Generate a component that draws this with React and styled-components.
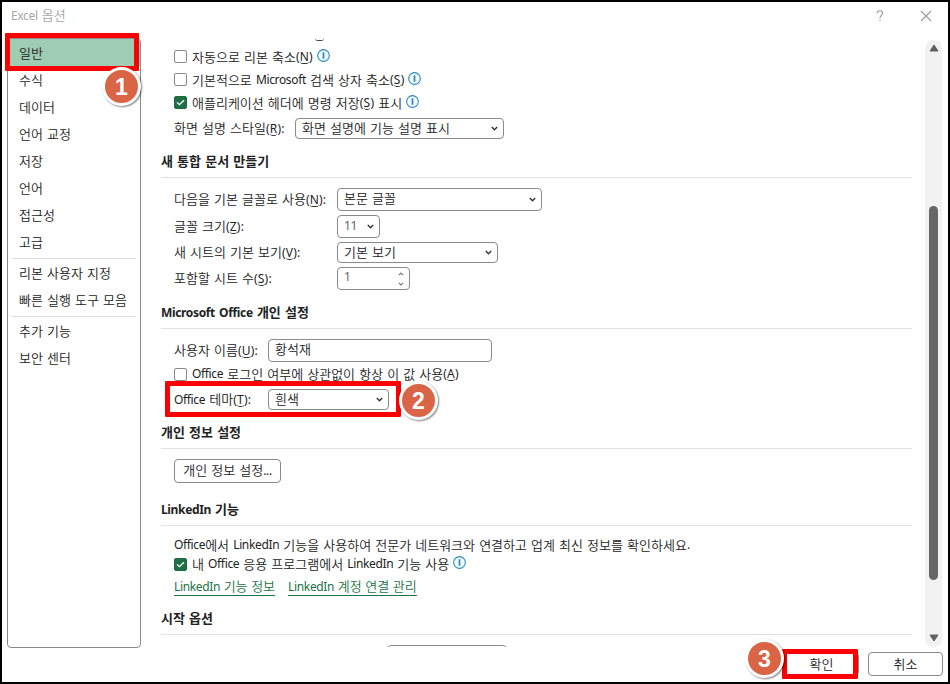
import React from 'react';
import styled, { createGlobalStyle } from 'styled-components';

const GlobalStyle = createGlobalStyle`
  * {
    box-sizing: border-box;
  }
  body {
    margin: 0;
    background-color: #fff;
    overflow: hidden;
  }
`

const Dialog = styled.div`
  position: relative;
  width: 950px;
  height: 684px;
  border: 2px solid #000;
  background-color: #fff;
  color: #222;
  font-family: "Noto Sans CJK KR", sans-serif;
  font-size: 13px;
  font-weight: 350;
  line-height: 20px;
  white-space: pre;
  word-spacing: 1.2px;

  display: flex;
  flex-direction: column;
`

const Latin = styled.span`
  font-family: "Noto Sans", sans-serif;
  font-size: 12px;
  font-weight: 400;
  letter-spacing: ${props => props.$wide ? '0.2px' : '-0.35px'};
`

const TitleBar = styled.header`
  height: 36px;
  padding: 3px 16px 0 9px;
  color: #a6a6a6;

  display: flex;
  justify-content: space-between;
  align-items: flex-start;
`

const TitleIcons = styled.div`
  display: flex;
  gap: 36px;
  padding-top: 5px;

  svg {
    display: block;
  }
`

const Body = styled.div`
  height: 610px;
  padding-left: 5px;
  display: flex;
`

const Sidebar = styled.nav`
  width: 134px;
  height: 610px;
  border: 1px solid #8a8a8a;
  border-radius: 4px;
`

const NavItem = styled.div`
  height: ${props => props.$h || 27}px;
  padding-left: 11px;
  background-color: ${props => props.$active ? '#9fcdb3' : 'transparent'};

  display: flex;
  align-items: center;
`

const NavLine = styled.div`
  height: 1px;
  margin: 2px 4px 0;
  background-color: #dcdcdc;
`

const Content = styled.main`
  width: 751px;
  height: 609px;
  margin-left: 20px;
  overflow: hidden;
`

const ClippedKey = styled.div`
  width: 9px;
  height: 3px;
  margin: 0 0 4px 154px;
  border-bottom: 1px solid #444;
  border-radius: 0 0 4px 4px;
`

const Heading = styled.h2`
  height: ${props => props.$h}px;
  margin: 0;
  padding-bottom: 6px;
  border-bottom: 1px solid #e1e1e1;
  font-size: 13px;
  font-weight: 700;

  display: flex;
  align-items: flex-end;

  ${Latin} {
    font-weight: 700;
    line-height: 1;
  }
`

const Group = styled.div`
  padding: ${props => props.$top || 0}px 0 0 13px;
  display: flex;
  flex-direction: column;
  align-items: flex-start;
  gap: ${props => props.$gap || 0}px;
`

const Row = styled.div`
  height: ${props => props.$h || 23}px;
  display: flex;
  align-items: center;
`

const Label = styled.label`
  width: ${props => props.$w}px;
  flex: none;
`

const Key = styled.u`
  text-decoration: none;
  display: inline-block;
  height: 15px;
  line-height: 15px;
  border-bottom: 1px solid #333;
  border-radius: 0 0 3px 3px;
`

const Field = styled.div`
  width: ${props => props.$w}px;
  height: ${props => props.$h || 23}px;
  padding: 0 6px ${props => props.$h ? 1 : 3}px 6px;
  border: 1px solid #8a8a8a;
  border-radius: 4px;
  background-color: #fff;
  color: ${props => props.$dim ? '#666' : '#222'};
  line-height: 18px;

  display: flex;
  justify-content: space-between;
  align-items: center;

  svg {
    position: relative;
    top: ${props => props.$h ? 0 : 1}px;
    left: 1px;
  }
`

const Spinner = styled.div`
  display: flex;
  flex-direction: column;
  gap: 6px;
  margin-top: 2px;
`

const Box = styled.span`
  width: 13px;
  height: 13px;
  flex: none;
  margin-right: 5px;
  border: 1px solid ${props => props.$on ? '#1c6b43' : '#8a8a8a'};
  border-radius: 2px;
  background-color: ${props => props.$on ? '#1e6e46' : '#fff'};

  display: flex;
  justify-content: center;
  align-items: center;
`

const InfoIcon = styled.svg`
  flex: none;
  margin: 0 0 3px 4px;
`

const Button = styled.button`
  width: ${props => props.$w}px;
  height: 24px;
  padding: 0 0 1px;
  border: 1px solid #8a8a8a;
  border-radius: 4px;
  background-color: #fff;
  color: #222;
  font: inherit;
  line-height: 20px;
  word-spacing: inherit;
`

const Links = styled(Row)`
  gap: 13px;
  word-spacing: 0.7px;
`

const Link = styled.a`
  color: #217346;
  line-height: 16px;
  border-bottom: 1px solid #217346;
`

const Track = styled.div`
  width: 17px;
  height: 607px;
  margin: 2px 0 0 13px;
  padding: 4px 0 5px;
  border-radius: 8px;
  background-color: #f2f2f2;

  display: flex;
  flex-direction: column;
  align-items: center;
`

const Thumb = styled.div`
  width: 9px;
  height: 374px;
  margin: 154px 0 auto;
  border-radius: 5px;
  background-color: #666;
`

const Footer = styled.footer`
  height: 34px;
  padding: 4px 5px 0 0;
  display: flex;
  justify-content: flex-end;
  gap: 9px;
`

// callouts drawn over the dialog
const Frame = styled.div`
  position: absolute;
  left: ${props => props.$x}px;
  top: ${props => props.$y}px;
  width: ${props => props.$w}px;
  height: ${props => props.$h}px;
  border: 5px solid #fa0000;
  border-radius: 1px;
`

const Badge = styled.div`
  position: absolute;
  left: ${props => props.$x}px;
  top: ${props => props.$y}px;
  width: 39px;
  height: 39px;
  border: 3px solid #fff;
  border-radius: 50%;
  background-color: #d96446;
  box-shadow: 1px 1px 2px rgba(0, 0, 0, 0.5);
  color: #fff;
  font-family: "Liberation Sans", sans-serif;
  font-size: 23px;
  font-weight: 700;

  display: flex;
  justify-content: center;
  align-items: center;
`

// hangul and latin runs use different faces
const T = ({ children }) => children.split(/([A-Za-z0-9():.]+)/).map((part, i) => (
  i % 2 ? <Latin key={i}>{part}</Latin> : part
))

const KeyLabel = ({ text, k, end = '' }) => (
  <><T>{text}</T><Latin $wide>(<Key>{k}</Key>){end}</Latin></>
)

const Chevron = ({ up, small }) => (
  <svg width={small ? 6 : 7} height={small ? 4 : 5} viewBox="0 0 7 5">
    <path d={up ? 'M0.8 4L3.5 1.3L6.2 4' : 'M0.8 1L3.5 3.7L6.2 1'} fill="none" stroke={small ? '#777' : '#333'} strokeWidth="1.4" />
  </svg>
)

const Arrow = ({ up }) => (
  <svg width="10" height="8" viewBox="0 0 10 8">
    <path d={up ? 'M5 1L9 7H1Z' : 'M5 7L9 1H1Z'} fill="#606060" stroke="#606060" strokeLinejoin="round" />
  </svg>
)

const Check = ({ on }) => (
  <Box $on={on}>
    {on && (
      <svg width="9" height="7" viewBox="0 0 9 7">
        <path d="M1 3.4L3.4 5.7L8 1.2" fill="none" stroke="#fff" strokeWidth="1.3" />
      </svg>
    )}
  </Box>
)

const Info = () => (
  <InfoIcon width="13" height="13" viewBox="0 0 12 12">
    <circle cx="6" cy="6" r="5.4" fill="#f4fbff" stroke="#2b88c0" strokeWidth="1" />
    <path d="M6 3V9" stroke="#2b88c0" strokeWidth="1.6" />
  </InfoIcon>
)

const Select = ({ w, h, dim, children }) => (
  <Field $w={w} $h={h} $dim={dim}>
    <span><T>{children}</T></span>
    <Chevron />
  </Field>
)

const App = () => {
  return (
    <>
      <GlobalStyle />
      <Dialog>
        <TitleBar>
          <span><T>Excel 옵션</T></span>
          <TitleIcons>
            <svg width="8" height="12" viewBox="0 0 8 12">
              <path d="M1.2 3.2C1.2 0 6.6 0 6.6 3.2C6.6 5.2 4 5.3 4 8M4 9.6V11" fill="none" stroke="#999" strokeWidth="1.1" />
            </svg>
            <svg width="12" height="12" viewBox="0 0 12 12">
              <path d="M1 1L11 11M11 1L1 11" stroke="#999" strokeWidth="1.1" />
            </svg>
          </TitleIcons>
        </TitleBar>
        <Body>
          <Sidebar>
            <NavItem $active>일반</NavItem>
            <NavItem>수식</NavItem>
            <NavItem>데이터</NavItem>
            <NavItem>언어 교정</NavItem>
            <NavItem>저장</NavItem>
            <NavItem>언어</NavItem>
            <NavItem>접근성</NavItem>
            <NavItem $h={28}>고급</NavItem>
            <NavLine />
            <NavItem>리본 사용자 지정</NavItem>
            <NavItem $h={28}>빠른 실행 도구 모음</NavItem>
            <NavLine />
            <NavItem>추가 기능</NavItem>
            <NavItem>보안 센터</NavItem>
          </Sidebar>
          <Content>
            <ClippedKey />
            <Group>
              <Row><Check /><KeyLabel text="자동으로 리본 축소" k="N" /><Info /></Row>
              <Row><Check /><KeyLabel text="기본적으로 Microsoft 검색 상자 축소" k="S" /><Info /></Row>
              <Row><Check on /><KeyLabel text="애플리케이션 헤더에 명령 저장" k="S" /> 표시<Info /></Row>
              <Row $h={29}>
                <Label $w={121}><KeyLabel text="화면 설명 스타일" k="R" end=":" /></Label>
                <Select w={209} h={21}>화면 설명에 기능 설명 표시</Select>
              </Row>
            </Group>
            <Heading $h={35}>새 통합 문서 만들기</Heading>
            <Group $top={10} $gap={4}>
              <Row>
                <Label $w={163}><KeyLabel text="다음을 기본 글꼴로 사용" k="N" end=":" /></Label>
                <Select w={205}>본문 글꼴</Select>
              </Row>
              <Row>
                <Label $w={163}><KeyLabel text="글꼴 크기" k="Z" end=":" /></Label>
                <Select w={43} dim>11</Select>
              </Row>
              <Row $h={21}>
                <Label $w={163}><KeyLabel text="새 시트의 기본 보기" k="V" end=":" /></Label>
                <Select w={161} h={21}>기본 보기</Select>
              </Row>
              <Row>
                <Label $w={163}><KeyLabel text="포함할 시트 수" k="S" end=":" /></Label>
                <Field $w={73} $dim>
                  <Latin>1</Latin>
                  <Spinner>
                    <Chevron up small />
                    <Chevron small />
                  </Spinner>
                </Field>
              </Row>
            </Group>
            <Heading $h={39}><span><T>Microsoft Office 개인 설정</T></span></Heading>
            <Group $top={10}>
              <Row>
                <Label $w={94}><KeyLabel text="사용자 이름" k="U" end=":" /></Label>
                <Field $w={224}>황석재</Field>
              </Row>
              <Row $h={24}><Check /><KeyLabel text="Office 로그인 여부에 상관없이 항상 이 값 사용" k="A" /></Row>
              <Row $h={27}>
                <Label $w={94}><KeyLabel text="Office 테마" k="T" end=":" /></Label>
                <Select w={121} h={21}>흰색</Select>
              </Row>
            </Group>
            <Heading $h={36}>개인 정보 설정</Heading>
            <Group $top={10}>
              <Button $w={107}><T>개인 정보 설정...</T></Button>
            </Group>
            <Heading $h={43}><span><T>LinkedIn 기능</T></span></Heading>
            <Group $top={9}>
              <Row $h={19}><T>Office에서 LinkedIn 기능을 사용하여 전문가 네트워크와 연결하고 업계 최신 정보를 확인하세요.</T></Row>
              <Row $h={20}><Check on /><T>내 Office 응용 프로그램에서 LinkedIn 기능 사용</T><Info /></Row>
              <Links $h={26}>
                <Link><T>LinkedIn 기능 정보</T></Link>
                <Link><T>LinkedIn 계정 연결 관리</T></Link>
              </Links>
            </Group>
            <Heading $h={35}>시작 옵션</Heading>
            <Group $top={10}>
              <Row>
                <Label $w={213} />
                <Field $w={120} />
              </Row>
            </Group>
          </Content>
          <Track>
            <Arrow up />
            <Thumb />
            <Arrow />
          </Track>
        </Body>
        <Footer>
          <Button $w={75}>확인</Button>
          <Button $w={75}>취소</Button>
        </Footer>
        <Frame $x={3} $y={31} $w={134} $h={38} />
        <Frame $x={163} $y={379} $w={236} $h={36} />
        <Frame $x={780} $y={647} $w={76} $h={30} />
        <Badge $x={100} $y={65}>1</Badge>
        <Badge $x={397} $y={379}>2</Badge>
        <Badge $x={743} $y={637}>3</Badge>
      </Dialog>
    </>
  )
}

export default App;
